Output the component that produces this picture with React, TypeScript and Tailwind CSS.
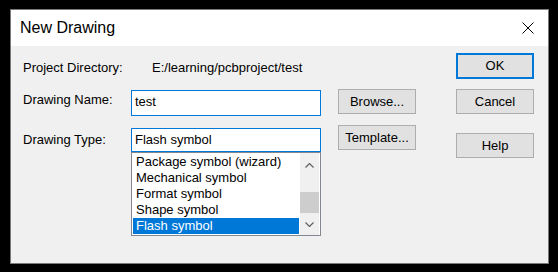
import React from "react";

const types = [
  "Package symbol (wizard)",
  "Mechanical symbol",
  "Format symbol",
  "Shape symbol",
  "Flash symbol",
];

function Button({
  label,
  primary,
  className,
}: {
  label: string;
  primary?: boolean;
  className?: string;
}) {
  return (
    <div
      className={
        "w-[78px] flex items-center justify-center bg-[#e1e1e1] " +
        (primary ? "border-2 border-[#0078d7] " : "border border-[#adadad] ") +
        (className ?? "")
      }
    >
      {label}
    </div>
  );
}

function Chevron({ up }: { up?: boolean }) {
  return (
    <svg width="9" height="5" viewBox="0 0 9 5">
      <polyline
        points={up ? "0.5,4.5 4.5,0.5 8.5,4.5" : "0.5,0.5 4.5,4.5 8.5,0.5"}
        fill="none"
        stroke="#606060"
        strokeWidth="1.2"
      />
    </svg>
  );
}

export default function App() {
  return (
    <div className="w-[558px] h-[272px] bg-black pt-[9px] pl-[10px] font-['Liberation_Sans',Arial,sans-serif] text-[13px] leading-4 text-black">
      <div className="w-[539px] h-[255px] border border-[#7a7a7a] bg-[#f0f0f0] flex flex-col">
        {/* Title bar */}
        <div className="h-[36px] bg-white flex items-center justify-between pl-[9px] pr-[14px]">
          <span className="text-[16px] leading-5">New Drawing</span>
          <svg width="12" height="12" viewBox="0 0 12 12">
            <path d="M0.5 0.5 L11.5 11.5 M11.5 0.5 L0.5 11.5" stroke="#000" strokeWidth="1" />
          </svg>
        </div>

        {/* Body */}
        <div className="flex-1 flex pl-[12px]">
          <div className="w-[393px] flex flex-col">
            <div className="mt-[11px] h-[22px] flex items-center">
              <span className="w-[129px]">Project Directory:</span>
              <span>E:/learning/pcbproject/test</span>
            </div>

            <div className="mt-[10px] flex items-start">
              <span className="w-[108px] mt-[3px]">Drawing Name:</span>
              <div className="w-[190px] h-[26px] mt-[1px] border border-[#0078d7] bg-white pl-[3px] pt-[3px]">
                test
              </div>
              <Button label="Browse..." className="ml-[17px] h-[25px]" />
            </div>

            <div className="mt-[9px] flex items-start">
              <span className="w-[108px] mt-[7px]">Drawing Type:</span>
              <div className="w-[190px] mt-[3px] flex flex-col">
                <div className="h-[24px] border border-[#0078d7] bg-white pl-[3px] pt-[3px]">
                  Flash symbol
                </div>
                <div className="h-[84px] border border-[#828790] bg-white flex">
                  <div className="flex-1 pt-[1px] pl-[1px]">
                    {types.map((t, i) => (
                      <div
                        key={t}
                        className={
                          i === types.length - 1
                            ? "h-[16px] pl-[3px] bg-[#0078d7] text-white"
                            : "h-[16px] pl-[3px]"
                        }
                      >
                        {t}
                      </div>
                    ))}
                  </div>
                  <div className="w-[19px] ml-[1px] mr-[1px] bg-[#f0f0f0] flex flex-col">
                    <div className="h-[24px] flex items-center justify-center">
                      <Chevron up />
                    </div>
                    <div className="h-[15px]" />
                    <div className="h-[21px] bg-[#cdcdcd]" />
                    <div className="flex-1 flex items-center justify-center">
                      <Chevron />
                    </div>
                  </div>
                </div>
              </div>
              <Button label="Template..." className="ml-[17px] h-[25px]" />
            </div>
          </div>

          <div className="ml-[40px] flex flex-col">
            <Button label="OK" primary className="mt-[7px] h-[26px]" />
            <Button label="Cancel" className="mt-[10px] h-[25px]" />
            <Button label="Help" className="mt-[19px] h-[25px]" />
          </div>
        </div>
      </div>
    </div>
  );
}
